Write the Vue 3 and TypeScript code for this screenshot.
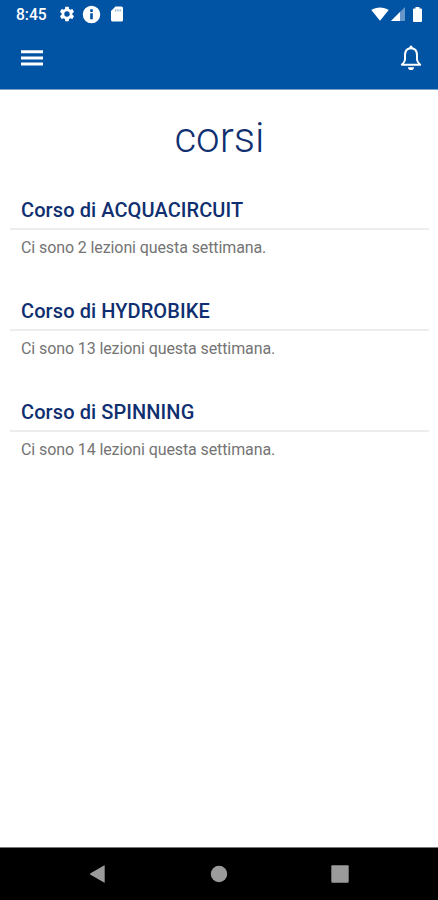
<script setup lang="ts">
interface Course {
  name: string
  lessons: number
}

const courses: Course[] = [
  { name: 'ACQUACIRCUIT', lessons: 2 },
  { name: 'HYDROBIKE', lessons: 13 },
  { name: 'SPINNING', lessons: 14 },
]
</script>

<template>
  <div class="screen">
    <header class="header">
      <div class="status">
        <div class="status-left">
          <span class="clock">8:45</span>
          <svg class="gear" viewBox="0 0 24 24"><path d="M19.14 12.94c.04-.3.06-.61.06-.94 0-.32-.02-.64-.07-.94l2.03-1.58a.49.49 0 0 0 .12-.61l-1.92-3.32a.49.49 0 0 0-.59-.22l-2.39.96c-.5-.38-1.03-.7-1.62-.94l-.36-2.54a.48.48 0 0 0-.48-.41h-3.84c-.24 0-.43.17-.47.41l-.36 2.54c-.59.24-1.13.57-1.62.94l-2.39-.96a.48.48 0 0 0-.59.22L2.74 8.87c-.12.21-.08.47.12.61l2.03 1.58c-.05.3-.09.63-.09.94s.02.64.07.94l-2.03 1.58a.49.49 0 0 0-.12.61l1.92 3.32c.12.22.37.29.59.22l2.39-.96c.5.38 1.03.7 1.62.94l.36 2.54c.05.24.24.41.48.41h3.84c.24 0 .44-.17.47-.41l.36-2.54c.59-.24 1.13-.56 1.62-.94l2.39.96c.22.08.47 0 .59-.22l1.92-3.32a.48.48 0 0 0-.12-.61zM12 15.6A3.6 3.6 0 1 1 12 8.400a3.6 3.6 0 0 1 0 7.200z" /></svg>
          <svg class="info" viewBox="0 0 24 24"><path fill-rule="evenodd" d="M12 2a10 10 0 1 0 0 20 10 10 0 0 0 0-20zm1.500 15.500h-3v-7h3zm0-8.500h-3V6h3z" /></svg>
          <svg class="card" viewBox="0 0 24 24"><path d="M18 2h-8L4 8v12c0 1.100.9 2 2 2h12a2 2 0 0 0 2-2V4a2 2 0 0 0-2-2z" /><path class="slots" d="M9.500 5.500H11v3H9.500zm3 0H14v3h-1.500zm3 0H17v3h-1.500z" /></svg>
        </div>
        <div class="status-right">
          <svg class="wifi" viewBox="0 0 18 14"><path d="M9 13.800 .3 3C5-.4 13-.4 17.700 3z" /></svg>
          <svg class="signal" viewBox="0 0 14 14"><path class="faint" d="M14 0v14H0z" /><path d="M9 5v9H0z" /></svg>
          <svg class="battery" viewBox="0 0 9 15"><path d="M2.500 0h4v1.500H8a1 1 0 0 1 1 1V14a1 1 0 0 1-1 1H1a1 1 0 0 1-1-1V2.500a1 1 0 0 1 1-1h1.500z" /></svg>
        </div>
      </div>
      <div class="toolbar">
        <svg class="menu" viewBox="0 0 22 16"><path d="M0 .2h22v3H0zm0 6.200h22v3H0zm0 6.200h22v3H0z" /></svg>
        <svg class="bell" viewBox="0 0 22 26"><path class="outline" d="M11 3.300c-4 0-6 3-6 7v4.200c0 2-1.300 3.500-3.200 5.200h18.400c-1.900-1.700-3.200-3.200-3.200-5.200v-4.200c0-4-2-7-6-7z" /><circle cx="11" cy="2.200" r="1.600" /><path d="M8 22.200h6a3 2.800 0 0 1-6 0z" /></svg>
      </div>
    </header>

    <main class="content">
      <h1 class="title">corsi</h1>
      <section v-for="course in courses" :key="course.name" class="course">
        <h2 class="name">Corso di {{ course.name }}</h2>
        <p class="lessons">Ci sono {{ course.lessons }} lezioni questa settimana.</p>
      </section>
    </main>

    <nav class="navbar">
      <svg class="nav-icon" viewBox="0 0 20 20"><path d="M2.500 9.200 16 1.400q.7-.4.700.4v16.400q0 .8-.7.400L2.500 10.800q-1.300-.8 0-1.600z" /></svg>
      <svg class="nav-icon" viewBox="0 0 20 20"><circle cx="10" cy="10" r="8.200" /></svg>
      <svg class="nav-icon" viewBox="0 0 20 20"><rect x="1.300" y="1.300" width="17.400" height="17.400" rx="1" /></svg>
    </nav>
  </div>
</template>

<style>
body {
  margin: 0;
}
</style>

<style scoped>
.screen {
  display: flex;
  flex-direction: column;
  width: 438px;
  height: 900px;
  overflow: hidden;
  background: #fff;
  font-family: Roboto, "Liberation Sans", sans-serif;
}

svg {
  display: block;
  flex: none;
  fill: #fff;
}

.header {
  box-sizing: border-box;
  height: 90px;
  background: #0153a4;
  border-bottom: 1px solid #7d9fcc;
}

.status {
  display: flex;
  justify-content: space-between;
  height: 28px;
  padding: 0 16px;
}

.status-left,
.status-right {
  display: flex;
  align-items: center;
}

.clock {
  width: 42px;
  padding-top: 1px;
  color: #fff;
  font-size: 15.600px;
  font-weight: 500;
  line-height: 28px;
}

.gear {
  width: 18px;
  height: 18px;
}

.info {
  width: 21px;
  height: 21px;
  margin-left: 5px;
}

.card {
  width: 18px;
  height: 18px;
  margin-left: 6px;
}

.slots {
  fill: #0153a4;
  opacity: 0.5;
}

.wifi {
  width: 18px;
  height: 14px;
}

.signal {
  width: 14px;
  height: 14px;
  margin-left: 2px;
}

.faint {
  opacity: 0.4;
}

.battery {
  width: 9px;
  height: 15px;
  margin-left: 8px;
}

.toolbar {
  display: flex;
  align-items: center;
  justify-content: space-between;
  height: 60px;
  padding: 0 16px 0 21px;
}

.menu {
  width: 22px;
  height: 16px;
}

.bell {
  width: 22px;
  height: 26px;
}

.outline {
  fill: none;
  stroke: #fff;
  stroke-width: 2;
  stroke-linejoin: round;
}

.content {
  flex: 1;
  padding: 20px 9px 0 10px;
}

.title {
  height: 54px;
  margin: 0 0 26px;
  color: #0f2f70;
  font-size: 42px;
  font-weight: 300;
  line-height: 55px;
  text-align: center;
}

.course {
  height: 101.200px;
}

.name {
  height: 38px;
  margin: 0;
  padding-left: 11px;
  border-bottom: 2px solid #ededed;
  color: #0f2f70;
  font-size: 20px;
  font-weight: 500;
  letter-spacing: 0.090px;
  line-height: 41px;
}

.lessons {
  margin: 0;
  padding-left: 11px;
  color: #747474;
  font-size: 16px;
  letter-spacing: -0.100px;
  line-height: 35px;
}

.navbar {
  box-sizing: border-box;
  display: flex;
  justify-content: space-between;
  height: 53px;
  padding: 16px 88px 0;
  border-top: 1px solid #777;
  background: #000;
}

.nav-icon {
  width: 20px;
  height: 20px;
  fill: #9b9b9b;
}
</style>
